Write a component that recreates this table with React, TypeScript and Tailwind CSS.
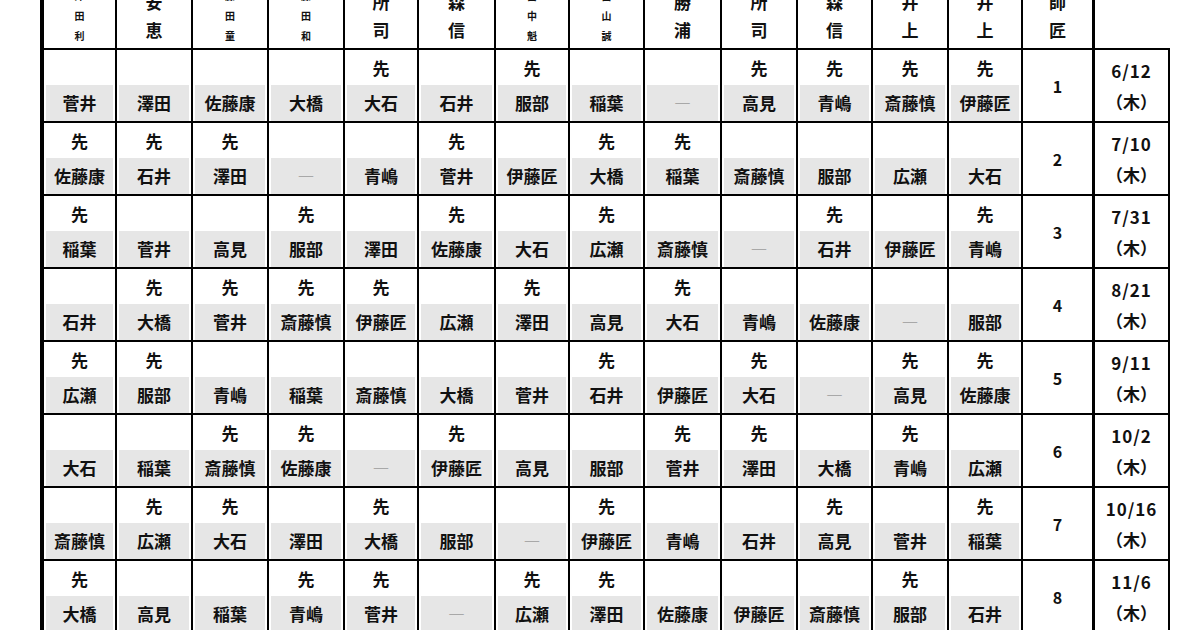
const GRID =
  "grid grid-cols-[73px_76px_76px_76px_74px_77px_74px_75px_77px_76px_75px_76px_74px_72px_75px]";

// header columns: small = three tiny kanji stacked, large = two bigger kanji
const headers: { chars: string[]; small: boolean }[] = [
  { chars: ["澤", "田", "利"], small: true },
  { chars: ["安", "恵"], small: false },
  { chars: ["藤", "田", "童"], small: true },
  { chars: ["藤", "田", "和"], small: true },
  { chars: ["所", "司"], small: false },
  { chars: ["森", "信"], small: false },
  { chars: ["畠", "中", "魁"], small: true },
  { chars: ["畠", "山", "誠"], small: true },
  { chars: ["勝", "浦"], small: false },
  { chars: ["所", "司"], small: false },
  { chars: ["森", "信"], small: false },
  { chars: ["井", "上"], small: false },
  { chars: ["井", "上"], small: false },
  { chars: ["師", "匠"], small: false },
];

type Row = { no: number; date: string; sen: number[]; names: string[] };

const rows: Row[] = [
  {
    no: 1,
    date: "6/12",
    sen: [5, 7, 10, 11, 12, 13],
    names: ["菅井", "澤田", "佐藤康", "大橋", "大石", "石井", "服部", "稲葉", "", "高見", "青嶋", "斎藤慎", "伊藤匠"],
  },
  {
    no: 2,
    date: "7/10",
    sen: [1, 2, 3, 6, 8, 9],
    names: ["佐藤康", "石井", "澤田", "", "青嶋", "菅井", "伊藤匠", "大橋", "稲葉", "斎藤慎", "服部", "広瀬", "大石"],
  },
  {
    no: 3,
    date: "7/31",
    sen: [1, 4, 6, 8, 11, 13],
    names: ["稲葉", "菅井", "高見", "服部", "澤田", "佐藤康", "大石", "広瀬", "斎藤慎", "", "石井", "伊藤匠", "青嶋"],
  },
  {
    no: 4,
    date: "8/21",
    sen: [2, 3, 4, 5, 7, 9],
    names: ["石井", "大橋", "菅井", "斎藤慎", "伊藤匠", "広瀬", "澤田", "高見", "大石", "青嶋", "佐藤康", "", "服部"],
  },
  {
    no: 5,
    date: "9/11",
    sen: [1, 2, 8, 10, 12, 13],
    names: ["広瀬", "服部", "青嶋", "稲葉", "斎藤慎", "大橋", "菅井", "石井", "伊藤匠", "大石", "", "高見", "佐藤康"],
  },
  {
    no: 6,
    date: "10/2",
    sen: [3, 4, 6, 9, 10, 12],
    names: ["大石", "稲葉", "斎藤慎", "佐藤康", "", "伊藤匠", "高見", "服部", "菅井", "澤田", "大橋", "青嶋", "広瀬"],
  },
  {
    no: 7,
    date: "10/16",
    sen: [2, 3, 5, 8, 11, 13],
    names: ["斎藤慎", "広瀬", "大石", "澤田", "大橋", "服部", "", "伊藤匠", "青嶋", "石井", "高見", "菅井", "稲葉"],
  },
  {
    no: 8,
    date: "11/6",
    sen: [1, 4, 5, 7, 8, 12],
    names: ["大橋", "高見", "稲葉", "青嶋", "菅井", "", "広瀬", "澤田", "佐藤康", "伊藤匠", "斎藤慎", "服部", "石井"],
  },
];

const Cell = ({ sen, name }: { sen: boolean; name: string }) => (
  <div className="flex h-full flex-col border-r-2 border-b-2 border-black">
    <div className="flex h-[35px] items-center justify-center text-[17px] font-bold">{sen ? "先" : ""}</div>
    <div className="mx-[2px] flex flex-1 items-center justify-center bg-[#e6e6e6] text-[17px] font-bold">
      {name ? name : <span className="font-normal text-[#9a9a9a]">―</span>}
    </div>
  </div>
);

export default function App() {
  return (
    <div className="h-[630px] w-[1200px] overflow-hidden bg-white font-['Noto_Sans_CJK_JP',sans-serif] text-[#111]">
      <div className="ml-[40px] w-[1130px] border-l-4 border-black">
        {/* header (top is cropped) */}
        <div className={`${GRID} h-[50px]`}>
          {headers.map((h, i) => (
            <div
              key={i}
              className={`flex flex-col items-center justify-end overflow-hidden border-b-2 border-black ${
                i === 13 ? "border-r-[3px]" : "border-r-2"
              } ${h.small ? "pb-[2px] text-[10px] leading-[20px]" : "pb-[4px] text-[17px] leading-[28px]"} font-bold`}
            >
              {h.chars.map((c, j) => (
                <span key={j}>{c}</span>
              ))}
            </div>
          ))}
          <div className="border-b-2 border-black" />
        </div>

        {rows.map((r) => (
          <div key={r.no} className={`${GRID} h-[73px]`}>
            {r.names.map((n, i) => (
              <Cell key={i} sen={r.sen.includes(i + 1)} name={n} />
            ))}
            <div className="flex items-center justify-center border-r-[3px] border-b-2 border-black text-[16px] font-bold">
              {r.no}
            </div>
            <div className="flex flex-col items-center justify-center border-r-2 border-b-2 border-black text-[17px] font-bold leading-[31px]">
              <span className="tracking-[1px]">{r.date}</span>
              <span>（木）</span>
            </div>
          </div>
        ))}
      </div>
    </div>
  );
}
